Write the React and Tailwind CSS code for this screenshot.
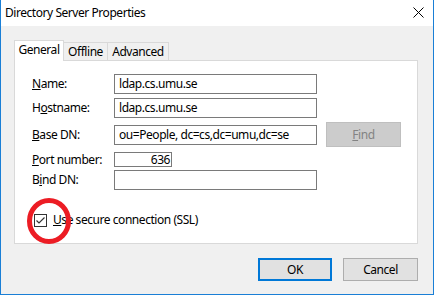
import React from "react";

const font = { fontFamily: '"Noto Sans", "Segoe UI", sans-serif' };

function Label({ children }) {
  return <div className="w-[82px] shrink-0 text-[12px] leading-[16px] text-black">{children}</div>;
}

function Input({ value, className = "" }) {
  return (
    <div
      className={`border border-[#7a7a7a] bg-white text-[12px] leading-[16px] text-black flex items-center px-[4px] ${className}`}
    >
      {value}
    </div>
  );
}

export default function App() {
  return (
    <div
      className="w-[434px] h-[295px] bg-[#f0f0f0] border-l border-r border-b border-[#1a7fd6] flex flex-col overflow-hidden tracking-[-0.45px]"
      style={font}
    >
      {/* title bar */}
      <div className="h-[26px] bg-white flex items-center justify-between shrink-0">
        <div className="pl-[4px] text-[12px] leading-[16px] text-black">Directory Server Properties</div>
        <svg width="11" height="11" viewBox="0 0 11 11" className="mr-[9px] mt-[-1px]">
          <path d="M0.5 0.5 L10.5 10.5 M10.5 0.5 L0.5 10.5" stroke="#000" strokeWidth="1" />
        </svg>
      </div>

      <div className="flex flex-col pl-[13px] pr-[15px] pt-[14px]">
        {/* tabs */}
        <div className="flex items-end h-[20px]">
          <div className="relative z-10 h-[21px] mb-[-1px] w-[50px] bg-white border-t border-l border-r border-[#d9d9d9] flex items-start justify-center pt-[1px] text-[12px] leading-[16px] text-black">
            General
          </div>
          <div className="h-[18px] w-[44px] border-t border-r border-[#d9d9d9] flex items-center justify-center text-[12px] leading-[16px] text-black">
            Offline
          </div>
          <div className="h-[18px] w-[61px] border-t border-r border-[#d9d9d9] flex items-center justify-center text-[12px] leading-[16px] text-black">
            Advanced
          </div>
        </div>

        {/* panel */}
        <div className="h-[184px] bg-white border border-[#d9d9d9] pl-[17px] pt-[13px] flex flex-col">
          <div className="flex items-center h-[20px]">
            <Label><u>N</u>ame:</Label>
            <Input value="ldap.cs.umu.se" className="w-[203px] h-[20px]" />
          </div>
          <div className="flex items-center h-[20px] mt-[4px]">
            <Label>H<u>o</u>stname:</Label>
            <Input value="ldap.cs.umu.se" className="w-[203px] h-[20px]" />
          </div>
          <div className="flex items-center h-[25px] mt-[4px]">
            <Label><u>B</u>ase DN:</Label>
            <Input value="ou=People, dc=cs,dc=umu,dc=se" className="w-[203px] h-[20px]" />
            <div className="ml-[9px] w-[75px] h-[25px] bg-[#cccccc] border border-[#bfbfbf] flex items-center justify-center text-[12px] leading-[16px] text-[#838383]">
              <span><u>F</u>ind</span>
            </div>
          </div>
          <div className="flex items-center h-[15px] mt-[5px]">
            <Label><u>P</u>ort number:</Label>
            <Input value="636" className="w-[58px] h-[15px] justify-end !px-[1px]" />
          </div>
          <div className="flex items-center h-[20px] mt-[3px]">
            <Label>B<u>i</u>nd DN:</Label>
            <Input value="" className="w-[203px] h-[20px]" />
          </div>
          <div className="flex items-center mt-[22px] relative">
            <div className="ml-[2px] w-[13px] h-[13px] border border-[#333333] bg-white flex items-center justify-center">
              <svg width="11" height="11" viewBox="0 0 11 11">
                <path d="M1.5 5.5 L4 8 L9.5 2.5" stroke="#333" strokeWidth="1.2" fill="none" />
              </svg>
            </div>
            <div className="ml-[6px] text-[12px] leading-[16px] text-black">
              <u>U</u>se secure connection (SSL)
            </div>
            <svg
              width="50"
              height="52"
              viewBox="0 0 50 52"
              className="absolute left-[-8px] top-[-17px]"
            >
              <ellipse cx="25" cy="26" rx="19.5" ry="20.5" stroke="#ec1c24" strokeWidth="5" fill="none" />
            </svg>
          </div>
        </div>

        {/* buttons */}
        <div className="flex justify-end mt-[14px] gap-[11px]">
          <div className="w-[74px] h-[23px] bg-[#e1e1e1] border-2 border-[#0078d7] flex items-center justify-center text-[12px] leading-[16px] text-black">
            OK
          </div>
          <div className="w-[75px] h-[23px] bg-[#e1e1e1] border border-[#adadad] flex items-center justify-center text-[12px] leading-[16px] text-black">
            Cancel
          </div>
        </div>
      </div>
    </div>
  );
}
